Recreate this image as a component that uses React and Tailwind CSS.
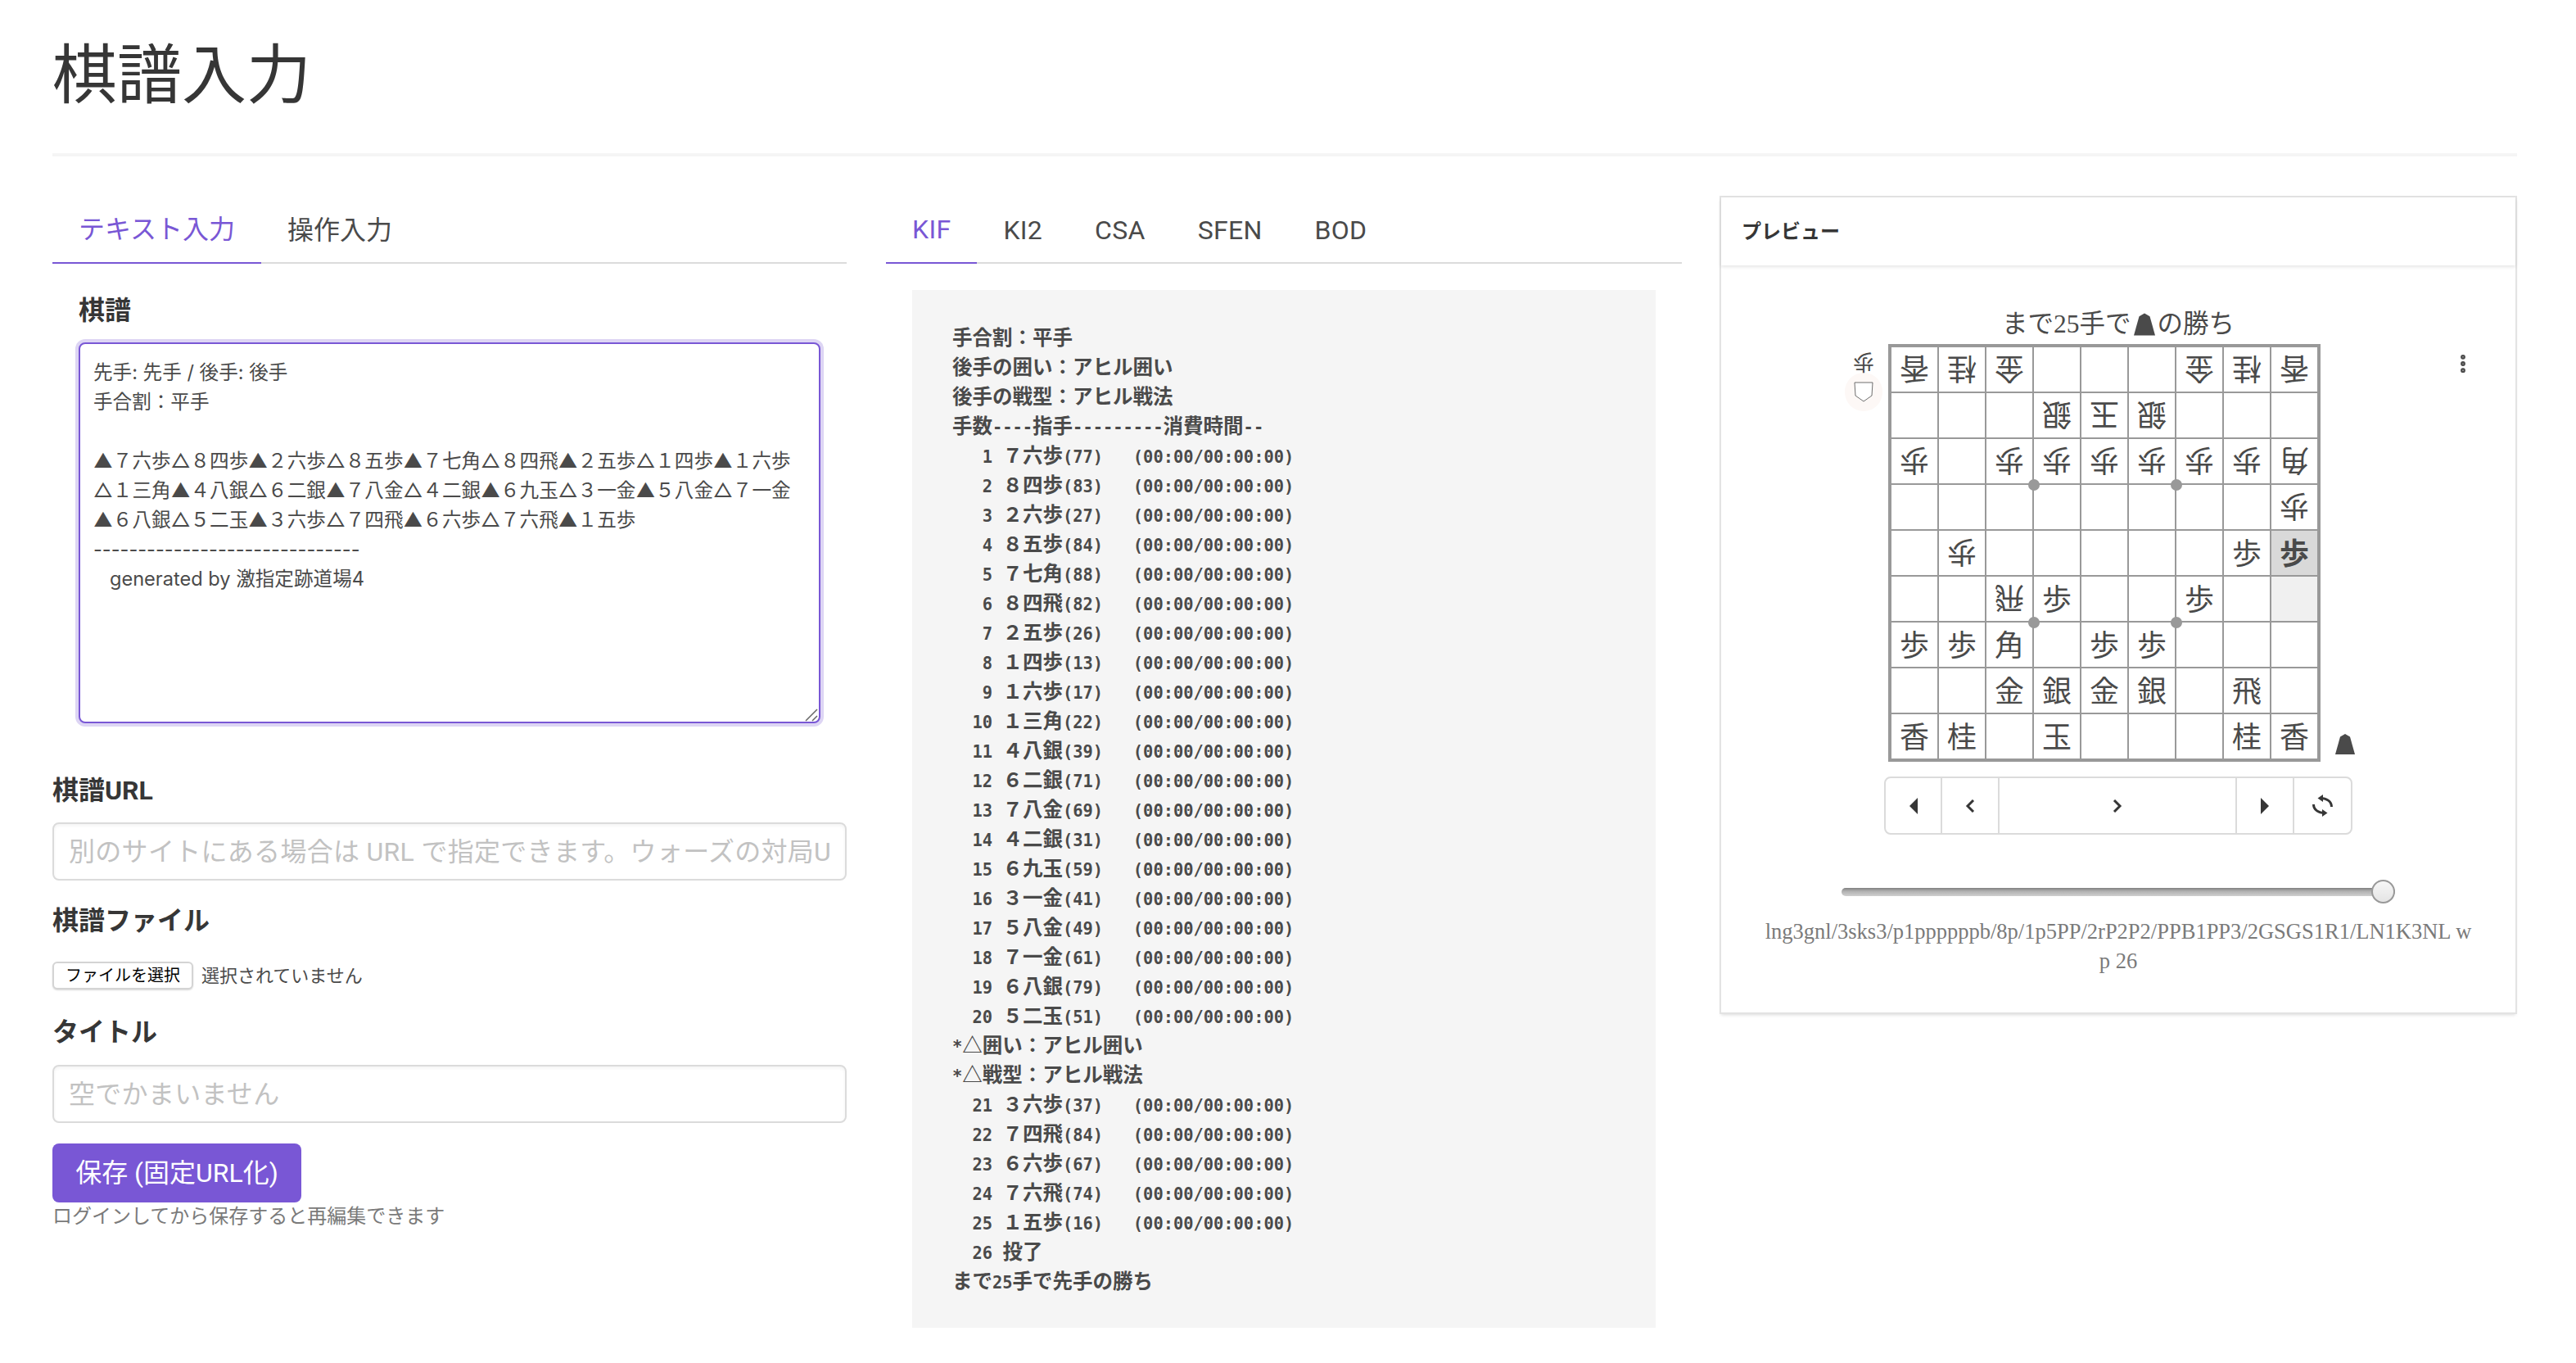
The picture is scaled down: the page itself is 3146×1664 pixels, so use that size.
import React from 'react';
import { EllipsisVertical } from 'lucide-react';

const SANS = "[font-family:Roboto,'Noto_Sans_CJK_JP',sans-serif]";

const kifText = `先手: 先手 / 後手: 後手
手合割：平手

▲７六歩△８四歩▲２六歩△８五歩▲７七角△８四飛▲２五歩△１四歩▲１六歩
△１三角▲４八銀△６二銀▲７八金△４二銀▲６九玉△３一金▲５八金△７一金
▲６八銀△５二玉▲３六歩△７四飛▲６六歩△７六飛▲１五歩
------------------------------
   generated by 激指定跡道場4`;

const moves = [
  '７六歩(77)', '８四歩(83)', '２六歩(27)', '８五歩(84)', '７七角(88)', '８四飛(82)', '２五歩(26)',
  '１四歩(13)', '１六歩(17)', '１三角(22)', '４八銀(39)', '６二銀(71)', '７八金(69)', '４二銀(31)',
  '６九玉(59)', '３一金(41)', '５八金(49)', '７一金(61)', '６八銀(79)', '５二玉(51)',
  '３六歩(37)', '７四飛(84)', '６六歩(67)', '７六飛(74)', '１五歩(16)',
];

const moveLine = (i) => `${String(i + 1).padStart(4, ' ')} ${moves[i]}   (00:00/00:00:00)`;

const kifLines = [
  '手合割：平手',
  '後手の囲い：アヒル囲い',
  '後手の戦型：アヒル戦法',
  '手数----指手---------消費時間--',
  ...moves.slice(0, 20).map((_, i) => moveLine(i)),
  '*△囲い：アヒル囲い',
  '*△戦型：アヒル戦法',
  ...moves.slice(20).map((_, i) => moveLine(i + 20)),
  '  26 投了',
  'まで25手で先手の勝ち',
];

// half width goes in the mono font, the rest at the bigger size so it takes two columns
const MonoLine = ({ text }) => (
  <div className="h-[36px] leading-[36px] font-bold whitespace-pre">
    {text.split(/([^\x00-\x7f]+)/).map((part, i) =>
      /[^\x00-\x7f]/.test(part) ? (
        <span key={i} className="text-[24.5px] [font-family:'Noto_Sans_CJK_JP',sans-serif]">{part}</span>
      ) : (
        <span key={i}>{part}</span>
      )
    )}
  </div>
);

const board = [
  ['l', 'n', 'g', '', '', '', 'g', 'n', 'l'],
  ['', '', '', 's', 'k', 's', '', '', ''],
  ['p', '', 'p', 'p', 'p', 'p', 'p', 'p', 'b'],
  ['', '', '', '', '', '', '', '', 'p'],
  ['', 'p', '', '', '', '', '', 'P', 'P'],
  ['', '', 'r', 'P', '', '', 'P', '', ''],
  ['P', 'P', 'B', '', 'P', 'P', '', '', ''],
  ['', '', 'G', 'S', 'G', 'S', '', 'R', ''],
  ['L', 'N', '', 'K', '', '', '', 'N', 'L'],
];

const glyphs = { l: '香', n: '桂', g: '金', s: '銀', k: '玉', p: '歩', b: '角', r: '飛' };

const Piece = ({ className }) => (
  <svg viewBox="0 0 24 25" className={className}>
    <path d="M12 0 L18 3.5 L24 25 L0 25 L6 3.5 Z" fill="#4a4a4a" />
  </svg>
);

const Tabs = ({ items, latin }) => (
  <div className={`flex h-[82px] border-b-2 border-[#dbdbdb] ${latin ? 'tracking-[0.3px]' : ''}`}>
    {items.map((t, i) => (
      <div
        key={t}
        className={
          i === 0
            ? 'flex h-[82px] items-center border-b-2 border-[#7957d5] px-8 text-[32px] text-[#7957d5]'
            : 'flex h-[82px] items-center px-8 text-[32px] text-[#4a4a4a]'
        }
      >
        {t}
      </div>
    ))}
  </div>
);

const Label = ({ className, children }) => (
  <div className={`text-[32px] leading-[42px] font-bold text-[#363636] ${className}`}>{children}</div>
);

const TextInput = ({ className, placeholder }) => (
  <input
    placeholder={placeholder}
    className={`block h-[71px] w-full rounded-lg border-2 border-[#dbdbdb] bg-white px-[18px] text-[32px] shadow-[inset_0_2px_4px_rgba(10,10,10,0.05)] outline-none placeholder:tracking-[0.3px] placeholder:text-[#c2c2c2] ${className}`}
  />
);

const NavCell = ({ className, children }) => (
  <div className={`flex h-full items-center justify-center ${className}`}>{children}</div>
);

const App = () => {
  return (
    <div className={`h-screen overflow-hidden bg-white pr-[72px] pl-16 text-[#4a4a4a] ${SANS}`}>
      <h1 className="pt-[47px] text-[79px] leading-[94px] text-[#363636] [font-family:'Liberation_Serif','Noto_Sans_CJK_JP',serif]">
        棋譜入力
      </h1>
      <div className="mt-[46px] h-1 bg-[#f5f5f5]" />

      <div className="mt-[49px] flex items-start">
        {/* Left column */}
        <div className="w-[970px] shrink-0">
          <Tabs items={['テキスト入力', '操作入力']} />
          <Label className="mt-[36px] px-8">棋譜</Label>
          <div className="relative mx-8 mt-[18px]">
            <textarea
              defaultValue={kifText}
              spellCheck={false}
              className="block h-[465px] w-full resize-none rounded-lg border-2 border-[#7957d5] bg-white px-4 py-[17px] text-[23.6px] leading-[36px] text-[#4a4a4a] shadow-[0_0_0_4px_rgba(121,87,213,0.25)] outline-none [font-family:Inter,'Noto_Sans_CJK_JP',sans-serif]"
            />
            <svg viewBox="0 0 16 16" className="absolute right-[3px] bottom-[2px] h-4 w-4">
              <path d="M1 15 L15 1 M9 15 L15 9" stroke="#666666" strokeWidth="1.5" fill="none" />
            </svg>
          </div>

          <Label className="mt-[61px]">棋譜URL</Label>
          <TextInput
            className="mt-[18px]"
            placeholder="別のサイトにある場合は URL で指定できます。ウォーズの対局URLも可"
          />

          <Label className="mt-[28px]">棋譜ファイル</Label>
          <div className="mt-[29px] flex h-[34px] items-center">
            <button className="flex h-[34px] w-[172px] items-center justify-center rounded-md border-2 border-[#d4d4d4] bg-white text-[20px] text-black shadow-[0_1px_2px_rgba(0,0,0,0.15)]">
              ファイルを選択
            </button>
            <span className="ml-[10px] text-[22px]">選択されていません</span>
          </div>

          <Label className="mt-[31px]">タイトル</Label>
          <TextInput className="mt-[19px]" placeholder="空でかまいません" />

          <button className="mt-[25px] flex h-[72px] w-[304px] items-center justify-center rounded-lg bg-[#7957d5] text-[32px] text-white">
            保存 (固定URL化)
          </button>
          <p className="text-[24px] leading-[34px] text-[#7a7a7a]">ログインしてから保存すると再編集できます</p>
        </div>

        {/* Middle column */}
        <div className="ml-12 w-[972px] shrink-0">
          <Tabs latin items={['KIF', 'KI2', 'CSA', 'SFEN', 'BOD']} />
          <div className="mx-8 mt-8 bg-[#f5f5f5] pt-[39px] pb-10 pl-[49px] text-[20.4px] text-[#4a4a4a] [font-family:'DejaVu_Sans_Mono',monospace]">
            {kifLines.map((line, i) => (
              <MonoLine key={i} text={line} />
            ))}
          </div>
        </div>

        {/* Preview card */}
        <div className="relative mt-px ml-12 h-[995px] w-[970px] shrink-0 bg-white shadow-[0_0_0_2px_#e3e3e3,0_3px_4px_rgba(10,10,10,0.15)]">
          <div className="flex h-[83px] items-center px-[25px] text-[24px] font-bold text-[#363636] shadow-[0_2px_4px_rgba(10,10,10,0.1)]">
            プレビュー
          </div>

          <EllipsisVertical size={28} strokeWidth={3} className="absolute top-[189px] right-[50px] text-[#4a4a4a]" />

          <div className="flex flex-col items-center pt-[54px] [font-family:'Liberation_Serif','Noto_Sans_CJK_JP',serif]">
            <div className="flex h-[36px] items-center text-[31.5px] text-[#4a4a4a]">
              まで25手で
              <Piece className="mx-[3px] h-[28px] w-[26px]" />
              の勝ち
            </div>

            <div className="mt-[6px] flex">
              {/* Gote hand */}
              <div className="flex w-[60px] flex-col items-center pt-2">
                <span className="rotate-180 text-[26px] leading-[26px] text-[#4a4a4a]">歩</span>
                <div className="mt-[1px] flex h-[47px] w-[46px] items-center justify-center rounded-full bg-[#fdf8f6]">
                  <svg viewBox="0 0 24 25" className="h-[25px] w-[24px]">
                    <path d="M1 1 L23 1 L22 17 L12 24 L2 17 Z" fill="#fff" stroke="#4a4a4a" strokeWidth="0.8" />
                  </svg>
                </div>
              </div>

              {/* Board */}
              <div className="relative border-4 border-[#999999] bg-white">
                {board.map((row, r) => (
                  <div key={r} className="flex">
                    {row.map((p, c) => {
                      const lastMove = r === 4 && c === 8;
                      const moveFrom = r === 5 && c === 8;
                      return (
                        <div
                          key={c}
                          className={[
                            'flex items-center justify-center border-[#999999] text-[36px] text-[#4a4a4a]',
                            c < 8 ? 'w-[58px] border-r-2' : 'w-[56px]',
                            r < 8 ? 'h-[56px] border-b-2' : 'h-[54px]',
                            lastMove ? 'bg-[#d9d9d9] font-bold' : '',
                            moveFrom ? 'bg-[#f0f0f0]' : '',
                          ].join(' ')}
                        >
                          {p && (
                            <span
                              className={
                                p === p.toLowerCase()
                                  ? '-translate-y-[2px] rotate-180 leading-none'
                                  : 'translate-y-[2px] leading-none'
                              }
                            >
                              {glyphs[p.toLowerCase()]}
                            </span>
                          )}
                        </div>
                      );
                    })}
                  </div>
                ))}
                <div className="absolute top-[161px] left-[167px] h-[14px] w-[14px] rounded-full bg-[#999999]" />
                <div className="absolute top-[161px] left-[341px] h-[14px] w-[14px] rounded-full bg-[#999999]" />
                <div className="absolute top-[329px] left-[167px] h-[14px] w-[14px] rounded-full bg-[#999999]" />
                <div className="absolute top-[329px] left-[341px] h-[14px] w-[14px] rounded-full bg-[#999999]" />
              </div>

              {/* Sente hand */}
              <div className="flex w-[94px] items-end pb-[9px] pl-[18px]">
                <Piece className="h-[25px] w-[24px]" />
              </div>
            </div>

            {/* Navigation */}
            <div className="mt-[18px] flex h-[71px] w-[572px] rounded-lg border-2 border-[#dbdbdb] bg-white">
              <NavCell className="w-[69px] border-r-2 border-[#dbdbdb]">
                <svg viewBox="0 0 10 20" className="h-[20px] w-[10px]"><path d="M10 0 V20 L0 10 Z" fill="#363636" /></svg>
              </NavCell>
              <NavCell className="w-[70px] border-r-2 border-[#dbdbdb]">
                <svg viewBox="0 0 12 16" className="h-[16px] w-[12px]"><path d="M10 1 L3 8 L10 15" fill="none" stroke="#363636" strokeWidth="3" /></svg>
              </NavCell>
              <NavCell className="flex-1 border-r-2 border-[#dbdbdb]">
                <svg viewBox="0 0 12 16" className="h-[16px] w-[12px]"><path d="M2 1 L9 8 L2 15" fill="none" stroke="#363636" strokeWidth="3" /></svg>
              </NavCell>
              <NavCell className="w-[70px] border-r-2 border-[#dbdbdb]">
                <svg viewBox="0 0 10 20" className="h-[20px] w-[10px]"><path d="M0 0 V20 L10 10 Z" fill="#363636" /></svg>
              </NavCell>
              <NavCell className="w-[69px]">
                <svg viewBox="0 0 25 27" className="h-[27px] w-[25px]">
                  <path d="M23.5 15 C23.5 8 17 4.5 10 4.5" fill="none" stroke="#363636" strokeWidth="3" />
                  <path d="M13 0 V9 L6.5 4.5 Z" fill="#363636" />
                  <path d="M1.5 12 C1.5 19 8 22.5 15 22.5" fill="none" stroke="#363636" strokeWidth="3" />
                  <path d="M12 18 V27 L18.5 22.5 Z" fill="#363636" />
                </svg>
              </NavCell>
            </div>

            {/* Slider */}
            <div className="relative mt-[65px] h-[10px] w-[676px] rounded-full bg-[linear-gradient(#808080,#b0b0b0_40%,#cfcfcf)]">
              <div className="absolute top-[-10px] right-0 h-[29px] w-[29px] rounded-full border-2 border-[#999999] bg-[linear-gradient(#f7f7f7,#e4e4e4)]" />
            </div>

            <p className="mt-[25px] w-[872px] text-center text-[26.5px] leading-[36px] text-[#7a7a7a]">
              lng3gnl/3sks3/p1ppppppb/8p/1p5PP/2rP2P2/PPB1PP3/2GSGS1R1/LN1K3NL w p 26
            </p>
          </div>
        </div>
      </div>
    </div>
  );
};

export default App;
